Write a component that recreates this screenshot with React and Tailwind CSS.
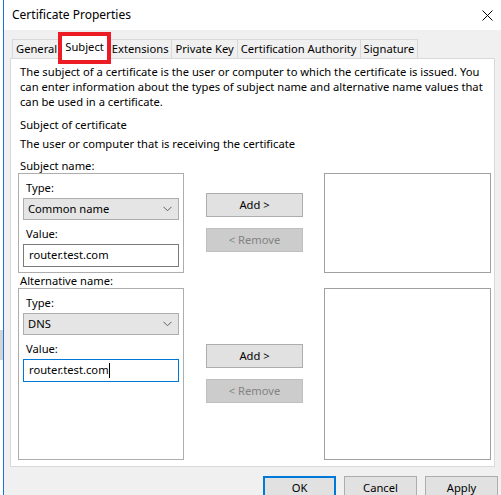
import React from 'react';

const font = { fontFamily: '"Segoe UI", "Noto Sans", sans-serif' };

function Chevron() {
  return (
    <svg width="9" height="6" viewBox="0 0 9 6" className="shrink-0">
      <path d="M0.5 0.8 L4.5 4.8 L8.5 0.8" fill="none" stroke="#606060" strokeWidth="1" />
    </svg>
  );
}

function NameBox({ type, value, focused, height }) {
  return (
    <div className={`w-[166px] shrink-0 border border-[#adadad] pt-[6px] px-[4px] flex flex-col ${height}`}>
      <div className="pl-[3px] leading-[15px]">Type:</div>
      <div className="mt-[3px] h-[22px] bg-[#e5e5e5] border border-[#adadad] flex items-center justify-between pl-[4px] pr-[6px]">
        <span>{type}</span>
        <Chevron />
      </div>
      <div className="mt-[6px] pl-[3px] leading-[15px]">Value:</div>
      <div
        className={`mt-[3px] h-[23px] bg-white border flex items-center pl-[5px] ${
          focused ? 'border-[#0078d7]' : 'border-[#7a7a7a]'
        }`}
      >
        <span>{value}</span>
        {focused && <span className="w-[1px] h-[15px] bg-black" />}
      </div>
    </div>
  );
}

function SideButtons({ top }) {
  return (
    <div className={`w-[97px] shrink-0 ml-[22px] flex flex-col gap-[11px] ${top}`}>
      <button className="h-[24px] bg-[#e1e1e1] border border-[#adadad] text-black">Add &gt;</button>
      <button className="h-[24px] bg-[#cccccc] border border-[#bfbfbf] text-[#838383]">&lt; Remove</button>
    </div>
  );
}

const tabs = ['General', 'Subject', 'Extensions', 'Private Key', 'Certification Authority', 'Signature'];

export default function App() {
  return (
    <div className="w-[501px] h-[495px] flex overflow-hidden text-[11.2px] text-black" style={font}>
      {/* background window edge */}
      <div className="w-[4px] shrink-0 bg-white border-r border-[#1a73d9] flex flex-col">
        <div className="h-[330px]" />
        <div className="h-[30px] bg-[#d4d4d4]" />
      </div>

      <div className="flex-1 flex flex-col bg-[#f0f0f0]">
        <div className="h-[30px] bg-white flex items-center justify-between pl-[8px] pr-[8px] shrink-0 text-[12px]">
          <span>Certificate Properties</span>
          <svg width="11" height="11" viewBox="0 0 11 11">
            <path d="M0.5 0.5 L10.5 10.5 M10.5 0.5 L0.5 10.5" stroke="#000" strokeWidth="1" />
          </svg>
        </div>

        {/* tabs */}
        <div className="relative flex items-end h-[28px] pl-[9px] shrink-0">
          {tabs.map((t) =>
            t === 'Subject' ? (
              <div
                key={t}
                className="relative z-10 shrink-0 whitespace-nowrap h-[24px] -mb-[1px] -ml-[1px] bg-white border border-b-0 border-[#d9d9d9] px-[4px] flex items-center"
              >
                {t}
                <div className="absolute -left-[3px] -right-[3px] top-[-4px] h-[32px] border-[4px] border-[#ed1c24]" />
              </div>
            ) : (
              <div
                key={t}
                className="shrink-0 whitespace-nowrap h-[19px] bg-[#f0f0f0] border border-b-0 border-[#d9d9d9] -ml-[1px] px-[3px] flex items-center"
              >
                {t}
              </div>
            )
          )}
        </div>

        {/* tab panel */}
        <div className="ml-[6px] w-[485px] h-[409px] shrink-0 bg-white border border-[#d9d9d9] px-[7px] pt-[5px] flex flex-col">
          <div className="pl-[2px] leading-[15px]">
            <div className="whitespace-nowrap">The subject of a certificate is the user or computer to which the certificate is issued. You</div>
            <div className="whitespace-nowrap">can enter information about the types of subject name and alternative name values that</div>
            <div className="whitespace-nowrap">can be used in a certificate.</div>
          </div>
          <div className="pl-[2px] leading-[15px] mt-[8px]">Subject of certificate</div>
          <div className="pl-[2px] leading-[15px] mt-[4px]">The user or computer that is receiving the certificate</div>

          <div className="pl-[2px] leading-[15px] mt-[7px]">Subject name:</div>
          <div className="flex">
            <NameBox type="Common name" value="router.test.com" height="h-[100px]" />
            <SideButtons top="mt-[20px]" />
            <div className="ml-[21px] w-[167px] shrink-0 h-[100px] border border-[#a0a0a0]" />
          </div>

          <div className="pl-[2px] leading-[15px]">Alternative name:</div>
          <div className="flex">
            <NameBox type="DNS" value="router.test.com" focused height="h-[172px]" />
            <SideButtons top="mt-[56px]" />
            <div className="ml-[21px] w-[167px] shrink-0 h-[172px] border border-[#a0a0a0]" />
          </div>
        </div>

        {/* footer */}
        <div className="flex justify-end gap-[8px] mt-[9px] pr-[3px] shrink-0">
          <button className="w-[73px] h-[24px] bg-[#e1e1e1] border-2 border-[#0078d7]">OK</button>
          <button className="w-[73px] h-[24px] bg-[#e1e1e1] border border-[#adadad]">Cancel</button>
          <button className="w-[73px] h-[24px] bg-[#e1e1e1] border border-[#adadad]">Apply</button>
        </div>
      </div>
    </div>
  );
}
